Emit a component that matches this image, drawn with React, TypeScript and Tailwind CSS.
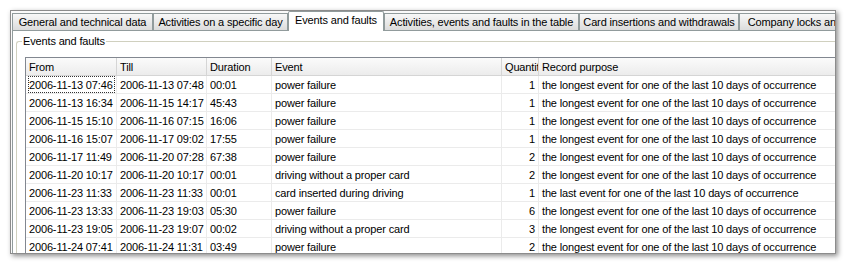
import { ReactNode } from "react";

const LONGEST = "the longest event for one of the last 10 days of occurrence";
const LAST = "the last event for one of the last 10 days of occurrence";

type Row = [string, string, string, string, number, string];

const rows: Row[] = [
  ["2006-11-13 07:46", "2006-11-13 07:48", "00:01", "power failure", 1, LONGEST],
  ["2006-11-13 16:34", "2006-11-15 14:17", "45:43", "power failure", 1, LONGEST],
  ["2006-11-15 15:10", "2006-11-16 07:15", "16:06", "power failure", 1, LONGEST],
  ["2006-11-16 15:07", "2006-11-17 09:02", "17:55", "power failure", 1, LONGEST],
  ["2006-11-17 11:49", "2006-11-20 07:28", "67:38", "power failure", 2, LONGEST],
  ["2006-11-20 10:17", "2006-11-20 10:17", "00:01", "driving without a proper card", 2, LONGEST],
  ["2006-11-23 11:33", "2006-11-23 11:33", "00:01", "card inserted during driving", 1, LAST],
  ["2006-11-23 13:33", "2006-11-23 19:03", "05:30", "power failure", 6, LONGEST],
  ["2006-11-23 19:05", "2006-11-23 19:07", "00:02", "driving without a proper card", 3, LONGEST],
  ["2006-11-24 07:41", "2006-11-24 11:31", "03:49", "power failure", 2, LONGEST],
];

const tabs = [
  { label: "General and technical data", w: "w-[141px]" },
  { label: "Activities on a specific day", w: "w-[135px]" },
  { label: "Events and faults", w: "w-[96px]", active: true },
  { label: "Activities, events and faults in the table", w: "w-[195px]" },
  { label: "Card insertions and withdrawals", w: "w-[160px]" },
  { label: "Company locks and faults", w: "w-[140px]" },
];

const cols = "grid grid-cols-[91px_90px_65px_230px_37px_320px]";

function Head({ children, right }: { children: ReactNode; right?: boolean }) {
  return (
    <div
      className={`h-[18px] border-r border-b border-[#d5d5d5] bg-linear-to-b from-[#fbfbfb] to-[#ececec] pl-[3px] leading-[18px] overflow-hidden whitespace-nowrap ${
        right ? "pr-[1px]" : ""
      }`}
    >
      {children}
    </div>
  );
}

function Cell({ children, className = "" }: { children: ReactNode; className?: string }) {
  return (
    <div
      className={`h-[18px] border-r border-b border-[#ebebeb] leading-[19px] overflow-hidden whitespace-nowrap ${className}`}
    >
      {children}
    </div>
  );
}

export default function App() {
  return (
    <div className="w-[846px] h-[266px] bg-white pt-[10px] pl-[10px] font-['Liberation_Sans',Arial,sans-serif] text-[11px] tracking-[-0.15px] text-black">
      <div className="w-[826px] h-[244px] overflow-hidden bg-[#fafafa] border border-[#8c8c8c] shadow-[2px_2px_5px_rgba(0,0,0,0.45)] flex flex-col">
        {/* tab strip */}
        <div className="h-[19px] flex items-end pl-[1px] shrink-0 whitespace-nowrap">
          {tabs.map((t) =>
            t.active ? (
              <div
                key={t.label}
                className={`${t.w} shrink-0 h-[20px] -mb-px relative z-10 bg-white border border-b-0 border-[#919b9c] rounded-t-[2px] text-center leading-[17px]`}
              >
                {t.label}
              </div>
            ) : (
              <div
                key={t.label}
                className={`${t.w} shrink-0 h-[17px] bg-linear-to-b from-[#f8f8f8] to-[#dcdcdc] border border-b-0 border-[#919b9c] text-center leading-[17px] overflow-hidden`}
              >
                {t.label}
              </div>
            ),
          )}
        </div>

        {/* panel */}
        <div className="flex-1 ml-[1px] border-t border-l border-[#919b9c] bg-white pl-[3px] pt-[10px]">
          <div className="relative border-t border-l border-[#d0d0bf] rounded-tl-[3px] pl-[8px] pt-[15px] h-[300px]">
            <span className="absolute -top-[8px] left-[5px] bg-white px-[1px] leading-[15px]">
              Events and faults
            </span>

            <div className="border-t border-l border-[#828790] w-[900px] bg-white">
              <div className={cols}>
                <Head>From</Head>
                <Head>Till</Head>
                <Head>Duration</Head>
                <Head>Event</Head>
                <Head right>Quantity</Head>
                <Head>Record purpose</Head>
              </div>
              {rows.map((r, i) => (
                <div key={i} className={cols}>
                  <Cell className="pl-[2px] pr-[1px]">
                    <span
                      className={`block h-[17px] pl-px ${
                        i === 0 ? "outline outline-dotted outline-[#333] -outline-offset-1" : ""
                      }`}
                    >
                      {r[0]}
                    </span>
                  </Cell>
                  <Cell className="pl-[3px]">{r[1]}</Cell>
                  <Cell className="pl-[3px]">{r[2]}</Cell>
                  <Cell className="pl-[3px]">{r[3]}</Cell>
                  <Cell className="pr-[3px] text-right">{r[4]}</Cell>
                  <Cell className="pl-[3px]">{r[5]}</Cell>
                </div>
              ))}
            </div>
          </div>
        </div>
      </div>
    </div>
  );
}
